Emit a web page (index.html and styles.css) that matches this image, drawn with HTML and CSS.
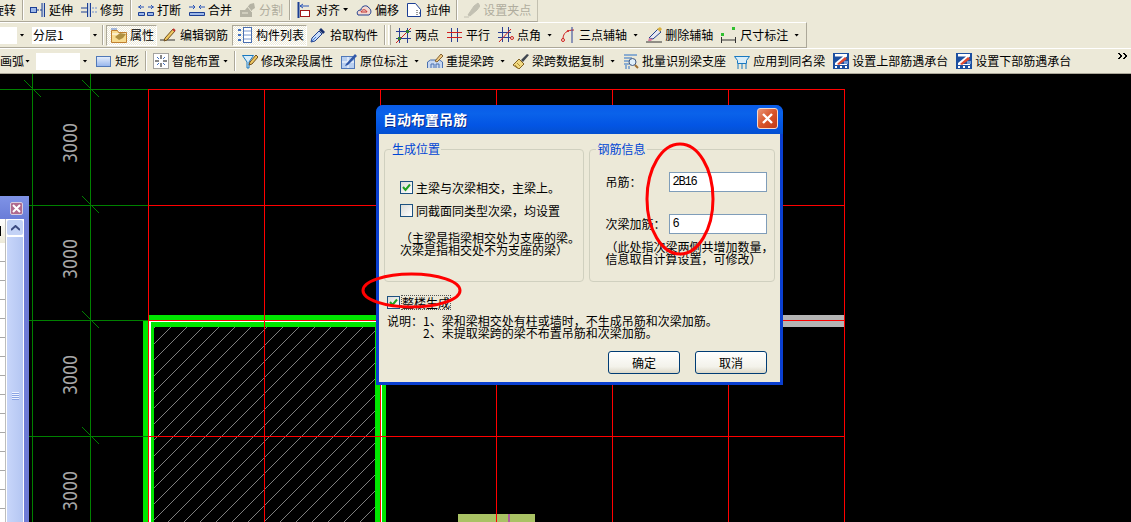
FILE: index.html
```html
<!DOCTYPE html>
<html lang="zh">
<head>
<meta charset="utf-8">
<title>自动布置吊筋</title>
<link rel="stylesheet" href="styles.css">
</head>
<body>
<svg class="defs" width="0" height="0" aria-hidden="true">
  <symbol id="i-extend" viewBox="0 0 16 16"><rect x=".5" y="5.500" width="6" height="5" fill="#9db8e8" stroke="#1c3f94"/><path d="M7 8h6" stroke="#1c3f94" stroke-dasharray="2 1"/><path d="M13 1v14" stroke="#9db8e8"/><path d="M12 1v14M14.500 1v14" stroke="#1c3f94"/></symbol>
  <symbol id="i-trim" viewBox="0 0 16 16"><path d="M0 6h6M0 10h6" stroke="#1c3f94"/><path d="M6.500 1v14M9.500 1v14" stroke="#1c3f94"/><path d="M8 1v14" stroke="#9db8e8"/><path d="M11 6h5M11 10h5" stroke="#6e8fd0" stroke-dasharray="2 1"/></symbol>
  <symbol id="i-break" viewBox="0 0 16 16"><path d="M0 5h6M3 3L1 5l2 2M16 5h-6M13 3l2 2-2 2" stroke="#2a55b8" fill="none"/><path d="M.5 10.500h6v3h-6zM9.500 10.500h6v3h-6z" fill="#9db8e8" stroke="#1c3f94"/></symbol>
  <symbol id="i-merge" viewBox="0 0 16 16"><path d="M0 5h6M4 3l2 2-2 2M16 5h-6M12 3l-2 2 2 2" stroke="#2a55b8" fill="none"/><path d="M.5 10.500h15v3H.5z" fill="#9db8e8" stroke="#1c3f94"/></symbol>
  <symbol id="i-split" viewBox="0 0 16 16"><path d="M0 15V8h5l5-6 4-1 1 5-3 2v7z" fill="#b5b3a4"/><path d="M2 11h6M7 4l5 6" stroke="#ece9d8"/></symbol>
  <symbol id="i-align" viewBox="0 0 16 16"><path d="M1.500 0v16" stroke="#1c3f94" stroke-width="2"/><rect x="3.500" y="8.500" width="9" height="6" fill="#fff" stroke="#a01818"/><path d="M3 4h9M6 2L3 4l3 2" stroke="#2a55b8" fill="none"/></symbol>
  <symbol id="i-offset" viewBox="0 0 16 16"><path d="M2 13c-2-3 0-5 3-5 0-4 6-6 8-2 2 1 3 5 0 7z" fill="#f5d8d0" stroke="#20408f"/><path d="M5 10c1-3 5-3 6 0z" fill="none" stroke="#c03030"/></symbol>
  <symbol id="i-stretch" viewBox="0 0 16 16"><path d="M.5 1.500h8l5 6v7H.5z" fill="#fff" stroke="#1c3f94"/><path d="M10 8v6M12 11h2" stroke="#333" stroke-dasharray="1 1"/></symbol>
  <symbol id="i-grip" viewBox="0 0 16 16"><path d="M0 15h5M4 13l6-9 4-3 2 3-3 4-7 6z" fill="#c2c0b2" stroke="#c2c0b2"/></symbol>
  <symbol id="i-props" viewBox="0 0 16 16"><path d="M.5 3.500h6l1 2h8v10H.5z" fill="#f8dc90" stroke="#c08030"/><path d="M1 7h14" stroke="#fff"/><path d="M4 10l5-4 6 1-3 4-4 2z" fill="#b09040"/><path d="M0 2h6" stroke="#5078c8"/></symbol>
  <symbol id="i-rebar" viewBox="0 0 16 16"><path d="M0 13h15" stroke="#333"/><path d="M5 11L13 2l2 2-8 9-3 1z" fill="#f0c860" stroke="#705020"/><path d="M13 2l2 2" stroke="#c03030" stroke-width="2"/></symbol>
  <symbol id="i-list" viewBox="0 0 16 16"><path d="M1 2h3v2H1zM1 7h3v2H1zM1 12h3v2H1z" fill="#4070c0"/><rect x="6.500" y=".5" width="8" height="15" fill="#fff" stroke="#4a6fb0"/><path d="M7 4h7M7 8h7M7 12h7" stroke="#7a9ad0"/></symbol>
  <symbol id="i-pick" viewBox="0 0 16 16"><path d="M1 15l1-4 7-7 3 3-7 7z" fill="#c8dcf8" stroke="#20408f"/><path d="M9 3l2-2 4 4-2 2z" fill="#18306f"/><path d="M2 14l4-4" stroke="#4080e0"/></symbol>
  <symbol id="i-twopt" viewBox="0 0 16 16"><path d="M3.500 1v15M11.500 1v15M0 4.500h15M0 11.500h15" stroke="#2a3f94"/><path d="M0 16L15 1" stroke="#d02020"/><rect x="2" y="10" width="3" height="3" fill="#308030"/><rect x="10" y="3" width="3" height="3" fill="#308030"/></symbol>
  <symbol id="i-parallel" viewBox="0 0 16 16"><path d="M4.500 1v14M10.500 1v14" stroke="#2a3f94"/><path d="M0 5.500h15M0 10.500h15" stroke="#d02020"/></symbol>
  <symbol id="i-angle" viewBox="0 0 16 16"><path d="M4.500 0v15M10.500 0v15M0 5.500h13M0 10.500h13" stroke="#2a3f94"/><path d="M1 15L13 2" stroke="#d02020"/><circle cx="14" cy="11" r="1.500" fill="none" stroke="#d02020"/></symbol>
  <symbol id="i-arc" viewBox="0 0 16 16"><path d="M3 12C3 6 7 3 14 3" fill="none" stroke="#d02020"/><path d="M12 0v16" stroke="#2a3f94"/><circle cx="3" cy="13" r="1.500" fill="none" stroke="#d02020"/><circle cx="8" cy="4" r="1" fill="#d02020"/></symbol>
  <symbol id="i-delaxis" viewBox="0 0 16 16"><path d="M0 15h16" stroke="#333"/><path d="M3 11L12 2l3 3-8 7z" fill="#e8e8f0" stroke="#20408f"/><path d="M3 11l4 1-2 2H2z" fill="#d880a0"/><path d="M11 2l3-2 2 2-2 3z" fill="#d8b040"/></symbol>
  <symbol id="i-dim" viewBox="0 0 16 16"><path d="M.5 10v6M14.500 10v6M1 13h13" stroke="#333"/><rect x="0" y="6" width="3" height="3" fill="#30c030"/><rect x="11" y="0" width="3" height="3" fill="#30c030"/></symbol>
  <symbol id="i-rect" viewBox="0 0 16 12"><defs><linearGradient id="g-rect" x1="0" y1="0" x2="0" y2="1"><stop offset="0" stop-color="#e8f0fc"/><stop offset="1" stop-color="#94b4ec"/></linearGradient></defs><rect x=".5" y="1.500" width="14" height="10" fill="url(#g-rect)" stroke="#5078b8"/></symbol>
  <symbol id="i-smart" viewBox="0 0 16 16"><rect x=".5" y=".5" width="15" height="15" fill="#fff" stroke="#555" stroke-dasharray="1 1"/><path d="M8 2v4M8 10v4M2 8h4M10 8h4" stroke="#111"/><path d="M4 4l2 2M12 4l-2 2M4 12l2-2M12 12l-2-2" stroke="#4070c0"/></symbol>
  <symbol id="i-filter" viewBox="0 0 16 16"><path d="M.5 2.500h11L7 9v6H5V9z" fill="#d8ecf8" stroke="#1878c0"/><path d="M8 9l6-7 2 2-6 7-3 1z" fill="#f0c860" stroke="#705020"/></symbol>
  <symbol id="i-inplace" viewBox="0 0 16 16"><rect x=".5" y="3.500" width="13" height="12" fill="#b8cff0" stroke="#5078b8"/><path d="M1 9h12M7 4v11" stroke="#fff"/><path d="M5 11L14 1l2 2-9 9-3 1z" fill="#3058a8"/></symbol>
  <symbol id="i-respan" viewBox="0 0 16 16"><path d="M.5 15V9l3-2h9l3 2v6M4 15v-4h3v4M9 15v-4h3v4" fill="#c8d8f0" stroke="#4a70b0"/><path d="M8 8l6-7 2 2-6 6z" fill="#f0c880" stroke="#806030"/></symbol>
  <symbol id="i-copy" viewBox="0 0 16 16"><path d="M0 12l6-6 5 5-5 5z" fill="#f0d880" stroke="#806020"/><path d="M8 7l6-6 2 1-6 7z" fill="#40464f"/><path d="M2 12l3 3M4 10l3 3" stroke="#b09030"/></symbol>
  <symbol id="i-batch" viewBox="0 0 16 16"><path d="M1 2h13M1 5h8M1 8h5M1 11h5" stroke="#2a70c8"/><circle cx="9.500" cy="9" r="3.500" fill="#e0f0fa" stroke="#405880"/><path d="M12 12l3 3" stroke="#a07030" stroke-width="2"/><path d="M3 12v4M6 13v3" stroke="#2a70c8"/></symbol>
  <symbol id="i-apply" viewBox="0 0 16 16"><path d="M.5 3.500h15l-3 4v3h-9v-3z" fill="#d8ecf8" stroke="#1878c0"/><path d="M4 11v5M8 11v5M12 11v5" stroke="#1878c0"/></symbol>
  <symbol id="i-pass" viewBox="0 0 16 16"><rect width="16" height="16" fill="#1c4fa0"/><path d="M2 1h12v2.500L5 11h9v1H2v-2l8-6.500H2z" fill="#fff"/><path d="M4 11l8-7 2 2-8 6z" fill="#e04a30"/><path d="M11 8h4v3h-4z" fill="#6f9ad8"/><path d="M2 13h2v2H2zM7 13h2v2H7zM12 13h2v2h-2z" fill="#fff"/></symbol>
</svg>

<div class="app">
  <header class="toolbars">
    <div class="row row-top">
      <div class="seg">
        <span class="item first"><span class="label">旋转</span></span>
        <i class="sep"></i>
        <span class="item"><svg class="ico"><use href="#i-extend"/></svg><span class="label">延伸</span></span>
        <span class="item"><svg class="ico"><use href="#i-trim"/></svg><span class="label">修剪</span></span>
        <i class="sep"></i>
        <span class="item"><svg class="ico"><use href="#i-break"/></svg><span class="label">打断</span></span>
        <span class="item"><svg class="ico"><use href="#i-merge"/></svg><span class="label">合并</span></span>
        <span class="item off"><svg class="ico"><use href="#i-split"/></svg><span class="label">分割</span></span>
        <i class="sep"></i>
        <span class="item"><svg class="ico"><use href="#i-align"/></svg><span class="label">对齐</span><b class="caret near"></b></span>
        <span class="item"><svg class="ico"><use href="#i-offset"/></svg><span class="label">偏移</span></span>
        <span class="item"><svg class="ico"><use href="#i-stretch"/></svg><span class="label">拉伸</span></span>
        <i class="sep"></i>
        <span class="item off"><svg class="ico"><use href="#i-grip"/></svg><span class="label">设置夹点</span></span>
      </div>
    </div>

    <div class="row row-mid">
      <div class="seg">
        <span class="combo c-a"><span class="combo-val"></span><b class="combo-btn"><b class="caret"></b></b></span>
        <span class="combo c-b"><span class="combo-val">分层1</span><b class="combo-btn"><b class="caret"></b></b></span>
        <i class="sep"></i>
        <span class="item on"><svg class="ico"><use href="#i-props"/></svg><span class="label">属性</span></span>
        <span class="item tight"><svg class="ico"><use href="#i-rebar"/></svg><span class="label">编辑钢筋</span></span>
        <span class="item on"><svg class="ico"><use href="#i-list"/></svg><span class="label">构件列表</span></span>
        <span class="item tight"><svg class="ico"><use href="#i-pick"/></svg><span class="label">拾取构件</span></span>
        <i class="sep"></i>
        <i class="gripper"></i>
        <span class="item"><svg class="ico"><use href="#i-twopt"/></svg><span class="label">两点</span></span>
        <span class="item"><svg class="ico"><use href="#i-parallel"/></svg><span class="label">平行</span></span>
        <span class="item"><svg class="ico"><use href="#i-angle"/></svg><span class="label">点角</span><b class="caret"></b></span>
        <span class="item"><svg class="ico"><use href="#i-arc"/></svg><span class="label">三点辅轴</span><b class="caret"></b></span>
        <span class="item"><svg class="ico"><use href="#i-delaxis"/></svg><span class="label">删除辅轴</span></span>
        <span class="item"><svg class="ico"><use href="#i-dim"/></svg><span class="label">尺寸标注</span><b class="caret"></b></span>
      </div>
    </div>

    <div class="row row-low">
      <span class="item start"><span class="label">画弧</span><b class="caret tuck"></b></span>
      <span class="combo c-c"><span class="combo-val"></span><b class="combo-btn"><b class="caret"></b></b></span>
      <span class="item"><svg class="ico"><use href="#i-rect"/></svg><span class="label">矩形</span></span>
      <i class="sep"></i>
      <span class="item"><svg class="ico"><use href="#i-smart"/></svg><span class="label">智能布置</span><b class="caret near"></b></span>
      <i class="sep"></i>
      <span class="item"><svg class="ico"><use href="#i-filter"/></svg><span class="label">修改梁段属性</span></span>
      <span class="item"><svg class="ico"><use href="#i-inplace"/></svg><span class="label">原位标注</span><b class="caret"></b></span>
      <span class="item"><svg class="ico"><use href="#i-respan"/></svg><span class="label">重提梁跨</span><b class="caret"></b></span>
      <span class="item"><svg class="ico"><use href="#i-copy"/></svg><span class="label">梁跨数据复制</span><b class="caret"></b></span>
      <span class="item"><svg class="ico"><use href="#i-batch"/></svg><span class="label">批量识别梁支座</span></span>
      <span class="item"><svg class="ico"><use href="#i-apply"/></svg><span class="label">应用到同名梁</span></span>
      <span class="item"><svg class="ico"><use href="#i-pass"/></svg><span class="label">设置上部筋遇承台</span></span>
      <span class="item"><svg class="ico"><use href="#i-pass"/></svg><span class="label">设置下部筋遇承台</span></span>
      <svg class="more" viewBox="0 0 9 7"><path d="M0 0l3 3-3 3M1 0l3 3-3 3M5 0l3 3-3 3M6 0l3 3-3 3" fill="none" stroke="#000"/></svg>
    </div>
  </header>

  <main class="canvas">
    <svg class="drawing" width="1131" height="448" viewBox="0 74 1131 448">
      <defs>
        <clipPath id="hatch-clip"><rect x="154" y="327" width="221" height="195"/></clipPath>
      </defs>
      <g shape-rendering="crispEdges">
        <path clip-path="url(#hatch-clip)" stroke="#b4b4b4" stroke-width=".7" fill="none" d="M154 328l221-221M154 344l221-221M154 360l221-221M154 376l221-221M154 392l221-221M154 408l221-221M154 424l221-221M154 440l221-221M154 456l221-221M154 472l221-221M154 488l221-221M154 504l221-221M154 520l221-221M154 536l221-221M154 552l221-221M154 568l221-221M154 584l221-221M154 600l221-221M154 616l221-221M154 632l221-221M154 648l221-221M154 664l221-221M154 680l221-221M154 696l221-221M154 712l221-221M154 728l221-221M154 744l221-221"/>
        <rect x="783" y="315" width="61" height="12" fill="#b4b4b4"/>
        <rect x="143" y="320" width="11" height="202" fill="#00e600"/>
        <rect x="149" y="315" width="237" height="12" fill="#00e600"/>
        <rect x="375" y="320" width="11" height="202" fill="#00e600"/>
        <rect x="149" y="321" width="2" height="201" fill="#fff"/>
        <rect x="149" y="321" width="232" height="1" fill="#fff"/>
        <rect x="381" y="321" width="1" height="201" fill="#fff"/>
        <rect x="458" y="514" width="77" height="8" fill="#a9c264"/>
        <rect x="508" y="514" width="2" height="8" fill="#b060a0"/>
        <path d="M32.500 74V522M90.500 74V522M0 89.500H148M0 205.500H148M0 320.500H148M0 436.500H148" stroke="#008000"/>
        <path d="M148.500 89V522M264.500 89V522M380.500 89V522M496.500 89V522M612.500 89V522M728.500 89V522M844.500 89V522M148 89.500H845M148 205.500H845M148 320.500H845M148 436.500H845" stroke="#f00"/>
      </g>
      <path d="M24 80L41 97M82 80L99 97M82 196L99 213M82 311L99 328M82 427L99 444" stroke="#008000"/>
      <g class="dim">
        <text transform="translate(77 163) rotate(-90)" textLength="40" lengthAdjust="spacingAndGlyphs">3000</text>
        <text transform="translate(77 279) rotate(-90)" textLength="40" lengthAdjust="spacingAndGlyphs">3000</text>
        <text transform="translate(77 395) rotate(-90)" textLength="40" lengthAdjust="spacingAndGlyphs">3000</text>
        <text transform="translate(77 511) rotate(-90)" textLength="40" lengthAdjust="spacingAndGlyphs">3000</text>
      </g>
    </svg>

    <aside class="side">
      <div class="side-title"><span class="side-close"><svg viewBox="0 0 9 9"><path d="M1 1l7 7M8 1L1 8" stroke="#fff" stroke-width="2"/></svg></span></div>
      <div class="side-body">
        <div class="side-list"><div class="side-head"></div><div class="side-rows"></div></div>
        <div class="side-scroll">
          <span class="sb-up"><svg viewBox="0 0 9 6"><path d="M0 5l4.500-4L9 5" fill="none" stroke="#3c4a80" stroke-width="2"/></svg></span>
          <span class="sb-thumb"><i class="sb-grip"></i></span>
        </div>
      </div>
    </aside>

    <section class="dialog">
      <div class="dlg-title">
        <span class="dlg-name">自动布置吊筋</span>
        <span class="dlg-close"><svg viewBox="0 0 11 11"><path d="M1 1l9 9M10 1l-9 9" stroke="#fff" stroke-width="2.400"/></svg></span>
      </div>
      <div class="dlg-body">
        <div class="groups">
          <fieldset class="group g-left">
            <legend>生成位置</legend>
            <label class="check"><i class="box checked"><svg viewBox="0 0 9 9"><path d="M1 4l2.500 3L8 1.500" fill="none" stroke="#21a121" stroke-width="2"/></svg></i>主梁与次梁相交，主梁上。</label>
            <label class="check second"><i class="box"></i>同截面同类型次梁，均设置</label>
            <p class="note">（主梁是指梁相交处为支座的梁。<br>次梁是指相交处不为支座的梁）</p>
          </fieldset>
          <fieldset class="group g-right">
            <legend>钢筋信息</legend>
            <div class="field"><span class="f-label">吊筋：</span><span class="input">2B16</span></div>
            <div class="field second"><span class="f-label">次梁加筋：</span><span class="input">6</span></div>
            <p class="note">（此处指次梁两侧共增加数量，<br>信息取自计算设置，可修改）</p>
          </fieldset>
        </div>
        <label class="check whole"><i class="box checked"><svg viewBox="0 0 9 9"><path d="M1 4l2.500 3L8 1.500" fill="none" stroke="#21a121" stroke-width="2"/></svg></i><span class="focus">整楼生成</span></label>
        <div class="explain">
          <span class="ex-label">说明：</span>
          <span class="ex-lines">1、梁和梁相交处有柱或墙时，不生成吊筋和次梁加筋。<br>2、未提取梁跨的梁不布置吊筋和次梁加筋。</span>
        </div>
        <div class="actions">
          <span class="btn">确定</span>
          <span class="btn">取消</span>
        </div>
      </div>
    </section>

    <svg class="marks" width="1131" height="448" viewBox="0 74 1131 448">
      <ellipse cx="680" cy="199" rx="33" ry="55" fill="none" stroke="#f00" stroke-width="3"/>
      <ellipse cx="411.500" cy="290.500" rx="48.500" ry="16.500" fill="none" stroke="#f00" stroke-width="3"/>
    </svg>
  </main>
</div>
</body>
</html>
```

FILE: styles.css
```css
* { box-sizing: border-box; }
html, body { margin: 0; padding: 0; background: #000; }
body {
  font-family: "Noto Sans CJK SC", "Liberation Sans", sans-serif;
  font-size: 12px;
  line-height: 12px;
  color: #000;
}
.defs { position: absolute; }
.app {
  width: 1131px;
  height: 522px;
  overflow: hidden;
  display: flex;
  flex-direction: column;
}

/* toolbars */
.toolbars { height: 74px; background: #ece9d8; flex: none; }
.row { display: flex; align-items: center; white-space: nowrap; }
.seg { display: flex; align-items: center; height: 100%; }
.row-top { height: 22px; }
.row-top .seg {
  width: 538px;
  border-right: 1px solid #c3c0b0;
  border-bottom: 1px solid #aca899;
  padding-bottom: 2px;
}
.row-mid { height: 26px; }
.row-mid .seg {
  width: 807px;
  border-top: 1px solid #fff;
  border-bottom: 1px solid #aca899;
  border-right: 1px solid #aca899;
}
.row-low {
  height: 26px;
  border-top: 1px solid #fff;
  border-bottom: 1px solid #aca899;
}
.item {
  display: inline-flex;
  align-items: center;
  gap: 3px;
  padding: 0 4px;
  flex: none;
}
.item.first { margin-left: -12px; }
.item.start { padding-left: 0; margin-right: 2px; }
.item.off { color: #b0ad9e; }
.item.on {
  height: 21px;
  padding: 0 2px 0 4px;
  border: 1px solid;
  border-color: #aca899 #fff #fff #aca899;
  background: repeating-conic-gradient(#fff 0 25%, #ece9d8 0 50%) 0 0 / 2px 2px;
}
.item.tight { padding: 0 4px 0 3px; gap: 4px; }
.label { display: block; }
.ico { width: 16px; height: 16px; flex: none; display: block; }
.caret {
  display: block;
  flex: none;
  width: 5px;
  height: 3px;
  margin-left: 3px;
  background: #000;
  clip-path: polygon(0 0, 100% 0, 50% 100%);
}
.caret.near { margin-left: 0; }
.caret.tuck { margin-left: -2px; }
.sep {
  flex: none;
  width: 2px;
  height: 20px;
  margin: 0 2px;
  border-left: 1px solid #aca899;
  border-right: 1px solid #fff;
}
.gripper {
  flex: none;
  width: 3px;
  height: 20px;
  margin: 0 1px 0 0;
  border-left: 1px solid #fff;
  border-right: 1px solid #aca899;
  background: #f5f3e8;
}
.more { width: 9px; height: 7px; margin: -9px 4px 0 auto; flex: none; }

/* combos */
.combo {
  display: flex;
  flex: none;
  height: 17px;
  background: #fff;
}
.combo-val { flex: 1; padding: 2px 0 0 1px; }
.combo-btn {
  display: flex;
  align-items: center;
  justify-content: center;
  width: 10px;
  background: #ece9d8;
}
.combo-btn .caret { margin: 0; }
.c-a { width: 27px; margin-right: 5px; }
.c-b { width: 68px; }
.c-c { width: 54px; margin-right: 2px; }

/* drawing area */
.canvas { position: relative; flex: 1; background: #000; overflow: hidden; }
.drawing, .marks { position: absolute; left: 0; top: 0; display: block; }
.marks { pointer-events: none; }
.dim text {
  font-family: "DejaVu Sans", sans-serif;
  font-size: 19px;
  fill: #a8a8a8;
}

/* side panel */
.side {
  position: absolute;
  left: 0;
  top: 122px;
  width: 29px;
  bottom: 0;
  display: flex;
  flex-direction: column;
  background: #6f7cd6;
}
.side-title {
  height: 23px;
  flex: none;
  padding: 6px 0 0 10px;
  background: linear-gradient(#7f93e6, #6a7dd8);
}
.side-close {
  display: flex;
  align-items: center;
  justify-content: center;
  width: 13px;
  height: 13px;
  border: 1px solid #d8cfe0;
  border-radius: 2px;
  background: #b06a8e;
}
.side-close svg { width: 9px; height: 9px; display: block; }
.side-body { flex: 1; display: flex; margin-right: 5px; background: #fff; }
.side-list { width: 6px; flex: none; border-right: 1px solid #bdbdbd; background: #fff; display: flex; flex-direction: column; }
.side-head {
  height: 24px;
  flex: none;
  background:
    linear-gradient(#000, #000) 0 7px / 1px 10px no-repeat,
    linear-gradient(#fff, #ece9d8);
}
.side-rows {
  flex: 1;
  background: repeating-linear-gradient(#fff 0 18px, #a8a8a8 18px 19px);
}
.side-scroll { flex: 1; padding: 1px 1px 0; display: flex; flex-direction: column; gap: 2px; background: #fff; }
.sb-up {
  flex: none;
  height: 15px;
  display: flex;
  align-items: center;
  justify-content: center;
  border-radius: 2px;
  background: #c3d2f6;
}
.sb-up svg { width: 9px; height: 6px; display: block; }
.sb-thumb {
  flex: 1;
  display: flex;
  flex-direction: column;
  align-items: center;
  padding-top: 155px;
  background: linear-gradient(90deg, #c8d6fa, #b4c6f2);
}
.sb-grip {
  display: block;
  width: 7px;
  height: 8px;
  background: repeating-linear-gradient(#eef3ff 0 1px, #8aa4e4 1px 2px);
}

/* dialog */
.dialog {
  position: absolute;
  left: 376px;
  top: 31px;
  width: 407px;
  height: 280px;
  display: flex;
  flex-direction: column;
  border-radius: 7px 7px 0 0;
  background: #0a3fd0;
}
.dlg-title {
  height: 29px;
  flex: none;
  display: flex;
  align-items: center;
  justify-content: space-between;
  padding: 0 5px 2px 7px;
  border-radius: 7px 7px 0 0;
  background: linear-gradient(#0a5ce8, #0a62ea 30%, #0355e4 70%, #0450d0);
}
.dlg-name {
  color: #fff;
  font-weight: 700;
  font-size: 14px;
  line-height: 14px;
  text-shadow: 1px 1px 0 #0a2f90;
}
.dlg-close {
  width: 21px;
  height: 21px;
  display: flex;
  align-items: center;
  justify-content: center;
  border: 1px solid #f4d8cc;
  border-radius: 3px;
  background: linear-gradient(135deg, #e99678, #d8552a 50%, #c03a18);
}
.dlg-close svg { width: 11px; height: 11px; display: block; }
.dlg-body {
  flex: 1;
  margin: 0 3px 3px;
  padding: 8px 5px 0;
  background: #ece9d8;
  display: flex;
  flex-direction: column;
}
.groups { display: flex; gap: 5px; height: 140px; flex: none; }
.group {
  margin: 0;
  min-width: 0;
  border: 1px solid #d0d0bf;
  border-radius: 4px;
  padding: 0 0 0 15px;
}
.group legend { padding: 0 1px; margin-left: -9px; color: #0046d5; line-height: 14px; }
.g-left { width: 201px; padding-top: 25px; }
.g-right { width: 186px; padding-top: 16px; }
.check { display: flex; align-items: center; gap: 3px; height: 13px; line-height: 13px; }
.check.second { margin-top: 10px; }
.box {
  display: flex;
  align-items: center;
  justify-content: center;
  flex: none;
  width: 13px;
  height: 13px;
  border: 1px solid #1c5180;
  background: linear-gradient(135deg, #dcdcd7, #fff);
}
.box svg { width: 9px; height: 9px; display: block; }
.note { margin: 15px 0 0; line-height: 12px; white-space: nowrap; }
.g-right .note { margin: 7px 0 0; }
.field { display: flex; align-items: center; height: 20px; }
.field.second { margin-top: 22px; }
.f-label { width: 64px; flex: none; }
.input {
  width: 98px;
  height: 20px;
  padding: 0 2px;
  border: 1px solid #7f9db9;
  background: #fff;
  font-family: "Liberation Mono", monospace;
  letter-spacing: -1.2px;
  line-height: 18px;
}
.whole { margin: 14px 0 0 3px; gap: 2px; }
.focus { outline: 1px dotted #555; outline-offset: 0; }
.explain { display: flex; margin: 6px 0 0 3px; line-height: 12px; }
.ex-label { width: 36px; flex: none; }
.actions { display: flex; justify-content: flex-end; gap: 15px; margin: 12px 8px 0 0; }
.btn {
  width: 72px;
  height: 23px;
  display: flex;
  align-items: center;
  justify-content: center;
  border: 1px solid #003c74;
  border-radius: 3px;
  background: linear-gradient(#fff, #f3f2ea 70%, #dcd8c8);
}
```
